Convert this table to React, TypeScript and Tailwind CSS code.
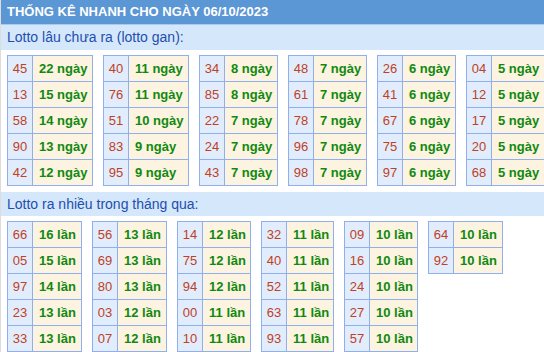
import React from "react";

type Row = [string, string];

const gan: Row[][] = [
  [["45", "22"], ["13", "15"], ["58", "14"], ["90", "13"], ["42", "12"]],
  [["40", "11"], ["76", "11"], ["51", "10"], ["83", "9"], ["95", "9"]],
  [["34", "8"], ["85", "8"], ["22", "7"], ["24", "7"], ["43", "7"]],
  [["48", "7"], ["61", "7"], ["78", "7"], ["96", "7"], ["98", "7"]],
  [["26", "6"], ["41", "6"], ["67", "6"], ["75", "6"], ["97", "6"]],
  [["04", "5"], ["12", "5"], ["17", "5"], ["20", "5"], ["68", "5"]],
];
// text column widths, written out so tailwind picks them up
const ganCols = [
  "grid-cols-[25px_60px]",
  "grid-cols-[25px_60px]",
  "grid-cols-[25px_53px]",
  "grid-cols-[25px_53px]",
  "grid-cols-[25px_53px]",
  "grid-cols-[25px_53px]",
];

const nhieu: Row[][] = [
  [["66", "16"], ["05", "15"], ["97", "14"], ["23", "13"], ["33", "13"]],
  [["56", "13"], ["69", "13"], ["80", "13"], ["03", "12"], ["07", "12"]],
  [["14", "12"], ["75", "12"], ["94", "12"], ["00", "11"], ["10", "11"]],
  [["32", "11"], ["40", "11"], ["52", "11"], ["63", "11"], ["93", "11"]],
  [["09", "10"], ["16", "10"], ["24", "10"], ["27", "10"], ["57", "10"]],
  [["64", "10"], ["92", "10"]],
];
const nhieuCols = [
  "grid-cols-[25px_49px]",
  "grid-cols-[25px_49px]",
  "grid-cols-[25px_48px]",
  "grid-cols-[25px_47px]",
  "grid-cols-[25px_48px]",
  "grid-cols-[25px_49px]",
];

const LotoTable: React.FC<{ rows: Row[]; unit: string; cols: string }> = ({ rows, unit, cols }) => {
  return (
    <div className={`grid ${cols} auto-rows-[26px] border-l border-t border-[#8fb0ec] shrink-0`}>
      {rows.map((r, i) => (
        <React.Fragment key={i}>
          <div className="flex items-center justify-center bg-[#e1edfc] border-r border-b border-[#8fb0ec] text-[#c0401f]">
            {r[0]}
          </div>
          <div className="flex items-center whitespace-nowrap pl-[6px] bg-[#fdf3e1] border-r border-b border-[#8fb0ec] text-[#10890f] font-bold">
            {r[1]} {unit}
          </div>
        </React.Fragment>
      ))}
    </div>
  );
};

export default function App() {
  return (
    <div
      className="w-[544px] h-[352px] overflow-hidden bg-white border-l border-[#dcdcdc] text-[13px]"
      style={{ fontFamily: '"Liberation Sans", Arial, sans-serif' }}
    >
      <div className="h-[24px] bg-[#5b96d5] flex items-center px-[6px] text-white font-bold text-[13px]">
        THỐNG KÊ NHANH CHO NGÀY 06/10/2023
      </div>
      <div className="h-[26px] bg-[#d5e7fb] border-t border-[#a9c9ee] flex items-center px-[6px] text-[#1d4fae] text-[14px]">
        Lotto lâu chưa ra (lotto gan):
      </div>
      <div className="flex items-start gap-[10px] px-[6px] pt-[5px]">
        {gan.map((t, i) => (
          <LotoTable key={i} rows={t} unit="ngày" cols={ganCols[i]} />
        ))}
      </div>
      <div className="h-[24px] mt-[6px] bg-[#d5e7fb] flex items-center px-[6px] text-[#1d4fae] text-[14px]">
        Lotto ra nhiều trong tháng qua:
      </div>
      <div className="flex items-start gap-[10px] px-[6px] pt-[5px]">
        {nhieu.map((t, i) => (
          <LotoTable key={i} rows={t} unit="lần" cols={nhieuCols[i]} />
        ))}
      </div>
    </div>
  );
}
